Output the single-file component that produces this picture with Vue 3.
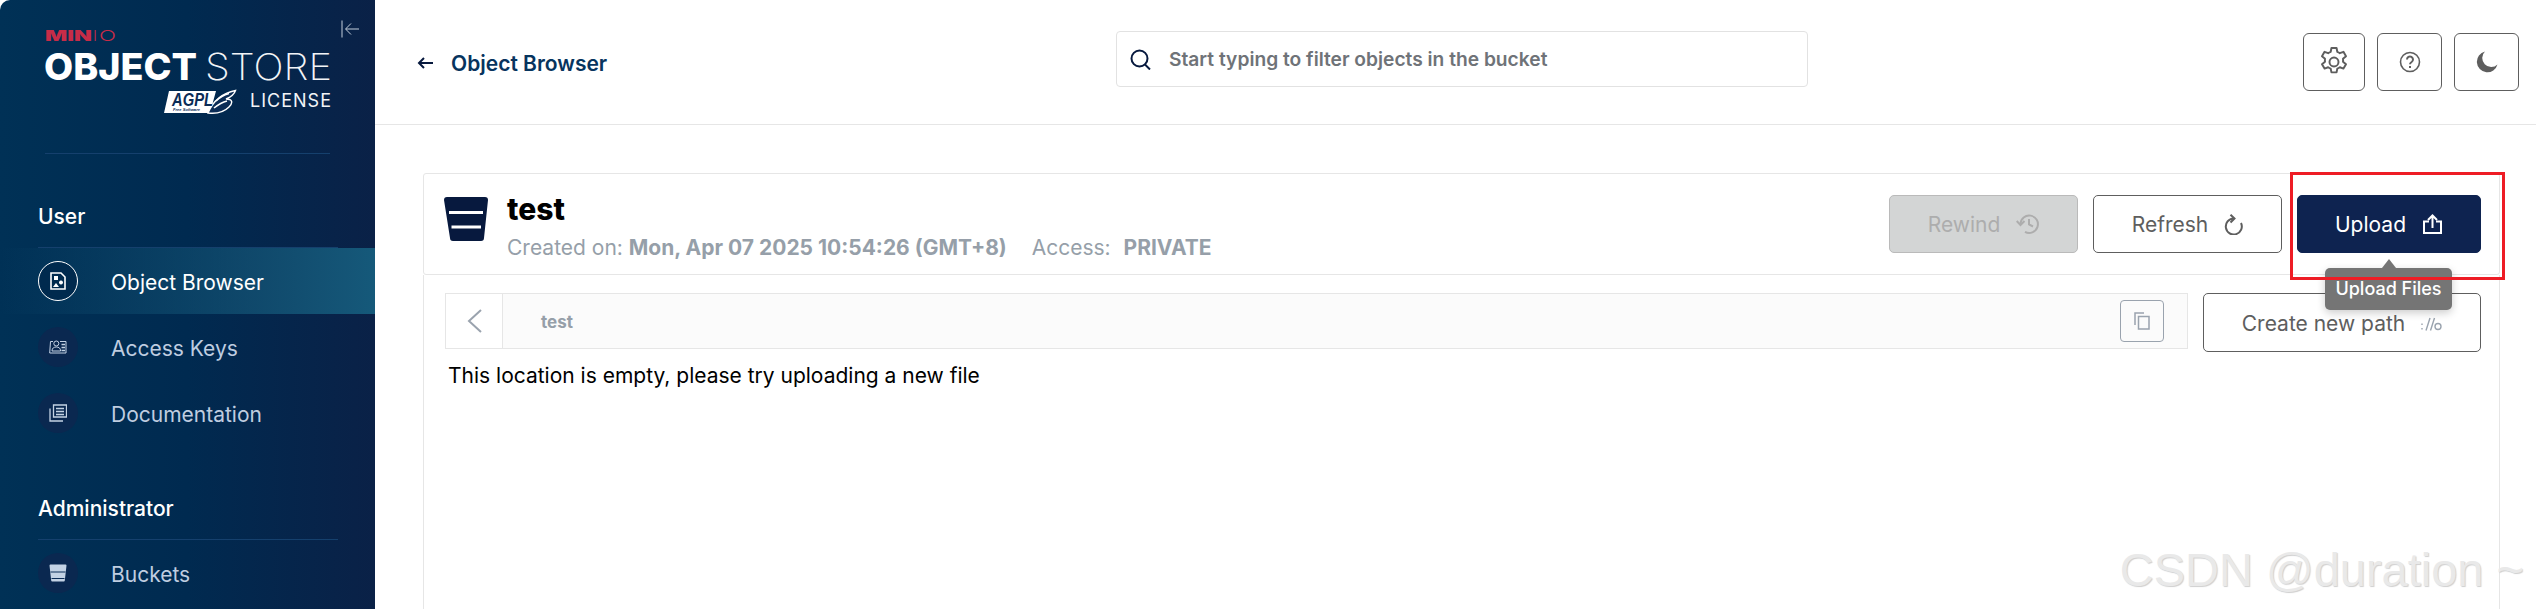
<script setup>
const userItems = [
  { label: 'Object Browser', icon: 'browser', active: true },
  { label: 'Access Keys', icon: 'keys' },
  { label: 'Documentation', icon: 'docs' },
]
</script>

<template>
  <div class="page">
    <aside class="side">
      <div class="brand">
        <svg class="collapse" width="18" height="18" viewBox="0 0 18 18" fill="none" stroke="#c4cfdc" stroke-width="1">
          <path d="M1 0.5V17.5M18 9H5M10 3.500L4.500 9L10 14.500" />
        </svg>
        <svg class="logo" width="300" height="100" viewBox="0 0 300 100">
          <g transform="translate(10 15)">
            <text x="0" y="11" class="l-min" textLength="47" lengthAdjust="spacingAndGlyphs">MIN</text>
            <text x="48" y="11" class="l-io" textLength="4" lengthAdjust="spacingAndGlyphs">I</text>
            <text x="54" y="11" class="l-io" textLength="17" lengthAdjust="spacingAndGlyphs">O</text>
            <text x="-1" y="50" class="l-obj" textLength="153" lengthAdjust="spacingAndGlyphs">OBJECT</text>
            <text x="160" y="50" class="l-sto" textLength="127" lengthAdjust="spacingAndGlyphs">STORE</text>
            <g transform="translate(119 60)">
              <path d="M5 1H52L46 23H0Z" fill="#fff" />
              <path d="M44 23C49 11 59 3 71.500 0.500C70 5 67 7 62 9C69 9 69 13 65 17C60 22 52 24 44 23Z" fill="#0b2c56" stroke="#fff" stroke-width="1.400" />
              <path d="M52 11C56 7 60 5 65 3.500M50 18C55 14 59 12 63 11" fill="none" stroke="#fff" stroke-width="1.600" />
              <text x="8" y="16" class="agpl-text" textLength="41" lengthAdjust="spacingAndGlyphs">AGPL</text>
              <text x="9" y="21" class="agpl-sub" textLength="27" lengthAdjust="spacingAndGlyphs">Free Software</text>
            </g>
            <text x="205" y="77" class="l-lic" textLength="81">LICENSE</text>
          </g>
        </svg>
        <div class="rule brand-rule"></div>
      </div>

      <div class="group">
        <div class="group-title">User</div>
        <div class="rule"></div>
        <div v-for="it in userItems" :key="it.label" class="item" :class="{ active: it.active }">
          <span class="disc">
            <svg v-if="it.icon === 'browser'" width="16" height="18" viewBox="0 0 16 18">
              <path d="M1 1H11L15 5V17H1Z" fill="none" stroke="#fff" stroke-width="1.600" />
              <path d="M4 4H8V8H4ZM11 8.500a2 2 0 1 1-.01 0ZM6 11l3 4H3Z" fill="#fff" />
            </svg>
            <svg v-else-if="it.icon === 'keys'" width="18" height="14" viewBox="0 0 18 14" fill="none" stroke="#c3d2e4" stroke-width="1">
              <path d="M4 1.500H1.500L0.700 13H17V1.500H11" />
              <circle cx="7.300" cy="3.500" r="2.500" />
              <path d="M3 11c0-3 2-4 4.300-4s4.300 1 4.300 4Z" />
              <path d="M12.500 4.500H16M12.500 7.500H16M12.500 10.500H16" stroke-width="1.400" />
            </svg>
            <svg v-else width="18" height="18" viewBox="0 0 18 18" fill="none" stroke="#c3d2e4" stroke-width="1.300">
              <path d="M4.500 1H17.500V13H4.500Z" />
              <path d="M7 4.500H15M7 7.500H15M7 10.500H15" />
              <path d="M1 4.500V17H14" />
            </svg>
          </span>
          <span class="label">{{ it.label }}</span>
        </div>
      </div>

      <div class="group admin">
        <div class="group-title">Administrator</div>
        <div class="rule"></div>
        <div class="item">
          <span class="disc">
            <svg width="18" height="18" viewBox="0 0 18 18">
              <path d="M0.500 1.500a1 1 0 0 1 1-1H16.500a1 1 0 0 1 1 1L15.800 16.500a1 1 0 0 1-1 1H3.200a1 1 0 0 1-1-1Z" fill="#c3d2e4" />
              <path d="M1.500 8H16.500M2.500 14.500H15.500" stroke="#0b2c56" stroke-width="1.200" />
            </svg>
          </span>
          <span class="label">Buckets</span>
        </div>
      </div>
    </aside>

    <main class="main">
      <header class="top">
        <div class="crumb">
          <svg width="16" height="12" viewBox="0 0 16 12" fill="none" stroke="#07193e" stroke-width="2">
            <path d="M16 6H2M7 1L2 6L7 11" />
          </svg>
          <span>Object Browser</span>
        </div>
        <div class="search">
          <svg width="21" height="21" viewBox="0 0 21 21" fill="none" stroke="#07193e" stroke-width="2">
            <circle cx="9.500" cy="9.500" r="8" />
            <path d="M14.500 15L20 20.500" />
          </svg>
          <span>Start typing to filter objects in the bucket</span>
        </div>
        <div class="tools">
          <button class="tool gear">
            <svg width="30" height="30" viewBox="2 2 20 20" fill="none" stroke="#5e5e5e" stroke-width="1.300" stroke-linejoin="round">
              <path d="M10.300 2.700h3.400l.5 2.500c.6.2 1.200.5 1.700.9l2.400-.9 1.700 2.900-2 1.700a7 7 0 0 1 0 2l2 1.700-1.700 2.900-2.400-.9c-.5.4-1.100.7-1.700.9l-.5 2.500h-3.400l-.5-2.500c-.6-.2-1.200-.5-1.700-.9l-2.400.9-1.700-2.900 2-1.700a7 7 0 0 1 0-2l-2-1.700 1.700-2.900 2.400.9c.5-.4 1.100-.7 1.700-.9Z" />
              <circle cx="12" cy="12" r="3" />
            </svg>
          </button>
          <button class="tool">
            <svg width="22" height="22" viewBox="0 0 22 22" fill="none" stroke="#5e5e5e" stroke-width="1.600">
              <circle cx="11" cy="11" r="9.500" />
              <path d="M8 8.500a3 3 0 1 1 4.600 2.500c-1 .6-1.600 1.100-1.600 2.300" stroke-width="2" />
              <path d="M11 15v2" stroke-width="2" />
            </svg>
          </button>
          <button class="tool">
            <svg width="22" height="22" viewBox="0 0 22 22">
              <path d="M9 0.500A10.500 10.500 0 1 0 21.500 13.500A9 9 0 0 1 9 0.500Z" fill="#5e5e5e" />
            </svg>
          </button>
        </div>
      </header>

      <section class="content">
        <div class="bucket">
          <svg class="bucket-icon" width="44" height="44" viewBox="0 0 44 44">
            <path d="M0 3a3 3 0 0 1 3-3H41a3 3 0 0 1 3 3L40 41a3 3 0 0 1-3 3H9a3 3 0 0 1-3-3Z" fill="#07193e" />
            <path d="M5 15.500H39M7.500 30H37" stroke="#fff" stroke-width="3" />
          </svg>
          <div class="bucket-text">
            <h1>test</h1>
            <p>
              <span>Created on:</span> <b>Mon, Apr 07 2025 10:54:26 (GMT+8)</b>
              <span class="access">Access:</span> <b class="priv">PRIVATE</b>
            </p>
          </div>
          <div class="actions">
            <button class="btn disabled">
              Rewind
              <svg width="23" height="20" viewBox="0 0 23 20" fill="none" stroke="#adadad" stroke-width="2">
                <path d="M4.500 10A8.700 8.700 0 1 1 9 17.800" />
                <path d="M13 5V10.500L17 12.500" />
                <path d="M0.700 7L4.500 11L8.500 7" />
              </svg>
            </button>
            <button class="btn">
              Refresh
              <svg width="19" height="21" viewBox="0 0 19 21" fill="none" stroke="#5e5e5e" stroke-width="2">
                <path d="M17 9A8 8 0 1 1 9.500 4.500" />
                <path d="M6.500 0.700L10.500 4.500L6.500 8.500" />
              </svg>
            </button>
            <div class="upload-wrap">
              <button class="btn primary">
                Upload
                <svg width="21" height="20" viewBox="0 0 21 20" fill="none" stroke="#fff" stroke-width="2">
                  <path d="M7 7.500H2V19H19V7.500H14" />
                  <path d="M10.500 14V2M6 6L10.500 1.500L15 6" />
                </svg>
              </button>
              <div class="tip">Upload Files</div>
            </div>
          </div>
        </div>

        <div class="browser">
          <div class="path-row">
            <div class="path">
              <div class="back">
                <svg width="15" height="24" viewBox="0 0 15 24" fill="none" stroke="#9aa3ae" stroke-width="2">
                  <path d="M14 1L2 12L14 23" />
                </svg>
              </div>
              <div class="path-name">test</div>
              <button class="copy">
                <svg width="16" height="18" viewBox="0 0 16 18" fill="none" stroke="#9aa3ae" stroke-width="1.500">
                  <path d="M4.500 4.500H15V17H4.500Z" />
                  <path d="M1 13V1H10" />
                </svg>
              </button>
            </div>
            <button class="btn new-path">
              Create new path
              <svg width="21" height="14" viewBox="0 0 21 14" fill="none" stroke="#9aa3ae" stroke-width="1.400">
                <path d="M1 6.500V8M1 11V12.500M5 13.500L9 1M9.500 13.500L13.500 1" />
                <circle cx="17" cy="9.500" r="3" />
              </svg>
            </button>
          </div>
          <div class="empty">This location is empty, please try uploading a new file</div>
        </div>
      </section>

      <div class="mark">CSDN @duration ~</div>
    </main>

    <div class="redbox"></div>
  </div>
</template>

<style>
html, body { margin: 0; background: #fff; overflow: hidden; }
</style>

<style scoped>
.page {
  position: relative;
  display: flex;
  width: 2536px;
  height: 609px;
  overflow: hidden;
  font-family: Inter, "Liberation Sans", sans-serif;
  background: #fff;
}
.side {
  width: 375px;
  flex: none;
  display: flex;
  flex-direction: column;
  border-top-left-radius: 10px;
  background: linear-gradient(90deg, #003156 0%, #002a50 50%, #0a2147 100%);
  color: #fff;
}
.brand {
  position: relative;
  height: 200px;
  padding: 15px 0 0 35px;
  box-sizing: border-box;
}
.collapse { position: absolute; left: 341px; top: 20px; }
.logo { display: block; font-family: Inter, "Liberation Sans", sans-serif; }
.l-min { font-size: 15px; font-weight: 900; fill: #c72c48; }
.l-io { font-size: 15px; font-weight: 300; fill: #c72c48; }
.l-obj { font-size: 37px; font-weight: 800; fill: #fff; }
.l-sto { font-size: 37px; font-weight: 200; fill: #f2f4f7; }
.l-lic { font-size: 18px; font-weight: 400; fill: #f2f4f7; }
.agpl-text { font: italic 700 19px "Liberation Sans", sans-serif; fill: #0b2c56; }
.agpl-sub { font: italic 700 4px "Liberation Sans", sans-serif; fill: #0b2c56; }
.rule { height: 1px; background: #15406d; width: 300px; }
.brand-rule { position: absolute; left: 45px; top: 153px; width: 285px; }
.group { padding-left: 38px; }
.group-title { font-size: 21px; font-weight: 500; line-height: 24px; height: 47px; padding-top: 5px; box-sizing: border-box; }
.item {
  margin-left: -38px;
  padding-left: 38px;
  height: 66px;
  display: flex;
  align-items: center;
  gap: 33px;
}
.item.active { background: linear-gradient(90deg, rgba(21, 89, 122, 0) 0%, #15597a 100%); }
.disc {
  width: 40px;
  height: 40px;
  border-radius: 50%;
  background: #0a2850;
  display: flex;
  align-items: center;
  justify-content: center;
  flex: none;
}
.active .disc { background: #002a4e; border: 1px solid #fff; box-sizing: border-box; }
.label { font-size: 21px; font-weight: 400; color: #bfcde0; padding-top: 3px; }
.active .label { color: #fff; }
.admin { margin-top: 46px; }
.main { flex: 1; position: relative; min-width: 0; }
.top {
  height: 125px;
  border-bottom: 1px solid #e6e6e6;
  box-sizing: border-box;
  display: flex;
  align-items: flex-start;
  padding: 0 17px 0 42px;
}
.crumb {
  display: flex;
  align-items: center;
  gap: 18px;
  margin-top: 51px;
  height: 24px;
  font-size: 21px;
  font-weight: 600;
  color: #07345e;
  width: 699px;
  flex: none;
}
.search {
  margin-top: 31px;
  width: 692px;
  height: 56px;
  border: 1px solid #e2e2e2;
  border-radius: 4px;
  box-sizing: border-box;
  display: flex;
  align-items: center;
  gap: 18px;
  padding-left: 13px;
  font-size: 19.2px;
  font-weight: 600;
  color: #6f7378;
  flex: none;
}
.tools { margin-left: auto; margin-top: 33px; display: flex; gap: 12px; }
.tool {
  height: 58px;
  width: 65px;
  border: 1px solid #5e5e5e;
  border-radius: 6px;
  background: #fff;
  display: flex;
  align-items: center;
  justify-content: center;
  padding: 0;
  box-sizing: border-box;
}
.tool.gear { width: 62px; }
.content { padding: 48px 36px 0 48px; }
.bucket {
  height: 102px;
  border: 1px solid #e6e6e6;
  border-radius: 3px;
  box-sizing: border-box;
  display: flex;
  align-items: flex-start;
  padding: 0 18px 0 20px;
}
.bucket-icon { flex: none; margin: 23px 19px 0 0; }
.bucket-text { padding-top: 17px; }
.bucket-text h1 { margin: 0; font-size: 30px; font-weight: 800; line-height: 36px; color: #000; }
.bucket-text p { margin: 7px 0 0; font-size: 21px; line-height: 28px; color: #969fa9; white-space: nowrap; }
.bucket-text b { font-weight: 700; }
.access { margin-left: 25px; }
.priv { margin-left: 7px; }
.actions { margin-left: auto; margin-top: 21px; display: flex; gap: 15px; }
.btn {
  height: 58px;
  width: 189px;
  border: 1px solid #5e5e5e;
  border-radius: 5px;
  background: #fff;
  color: #5e5e5e;
  font-family: inherit;
  font-size: 21px;
  font-weight: 400;
  display: flex;
  align-items: center;
  justify-content: center;
  gap: 16px;
  padding: 0;
  box-sizing: border-box;
}
.btn.disabled { background: #d3d5d5; border-color: #bababa; color: #adadad; }
.btn.primary { background: #0e2350; border-color: #0e2350; color: #fff; width: 184px; }
.upload-wrap { position: relative; }
.tip {
  position: absolute;
  left: 28px;
  top: 73px;
  width: 127px;
  height: 42px;
  line-height: 42px;
  text-align: center;
  background: #757575;
  color: #fff;
  border-radius: 5px;
  font-size: 18px;
  font-weight: 500;
  white-space: nowrap;
  box-shadow: 0 3px 8px rgba(0, 0, 0, 0.2);
  z-index: 3;
}
.tip::before {
  content: "";
  position: absolute;
  left: 57px;
  top: -9px;
  border-left: 7px solid transparent;
  border-right: 7px solid transparent;
  border-bottom: 9px solid #757575;
}
.browser {
  height: 334px;
  border: 1px solid #e6e6e6;
  border-width: 0 1px;
  box-sizing: border-box;
  padding: 18px 18px 0 21px;
}
.path-row { display: flex; gap: 15px; align-items: flex-start; }
.path {
  flex: 1;
  height: 56px;
  border: 1px solid #e6e6e6;
  box-sizing: border-box;
  display: flex;
  align-items: center;
  background: #fbfbfb;
}
.back {
  width: 57px;
  height: 100%;
  background: #fff;
  border-right: 1px solid #e6e6e6;
  box-sizing: border-box;
  display: flex;
  align-items: center;
  justify-content: center;
  flex: none;
}
.path-name { font-size: 17px; font-weight: 700; color: #969fa9; margin-left: 38px; padding-top: 2px; }
.copy {
  margin-left: auto;
  margin-right: 23px;
  width: 44px;
  height: 42px;
  border: 1px solid #9aa3ae;
  border-radius: 4px;
  background: #fbfbfb;
  display: flex;
  align-items: center;
  justify-content: center;
  padding: 0;
  box-sizing: border-box;
}
.btn.new-path { width: 278px; height: 59px; flex: none; padding-top: 2px; }
.empty { margin-top: 10px; padding-left: 3px; font-size: 21px; line-height: 28px; color: #000; }
.mark {
  position: absolute;
  right: 12px;
  bottom: 12px;
  font: 400 47px "Liberation Sans", sans-serif;
  color: #e9e9e9;
  text-shadow: 1px 1px 1px #cfcfcf;
  white-space: nowrap;
  z-index: 4;
}
.redbox {
  position: absolute;
  left: 2290px;
  top: 172px;
  width: 215px;
  height: 108px;
  border: 3px solid #ee1c25;
  box-sizing: border-box;
  z-index: 5;
  pointer-events: none;
}
</style>
